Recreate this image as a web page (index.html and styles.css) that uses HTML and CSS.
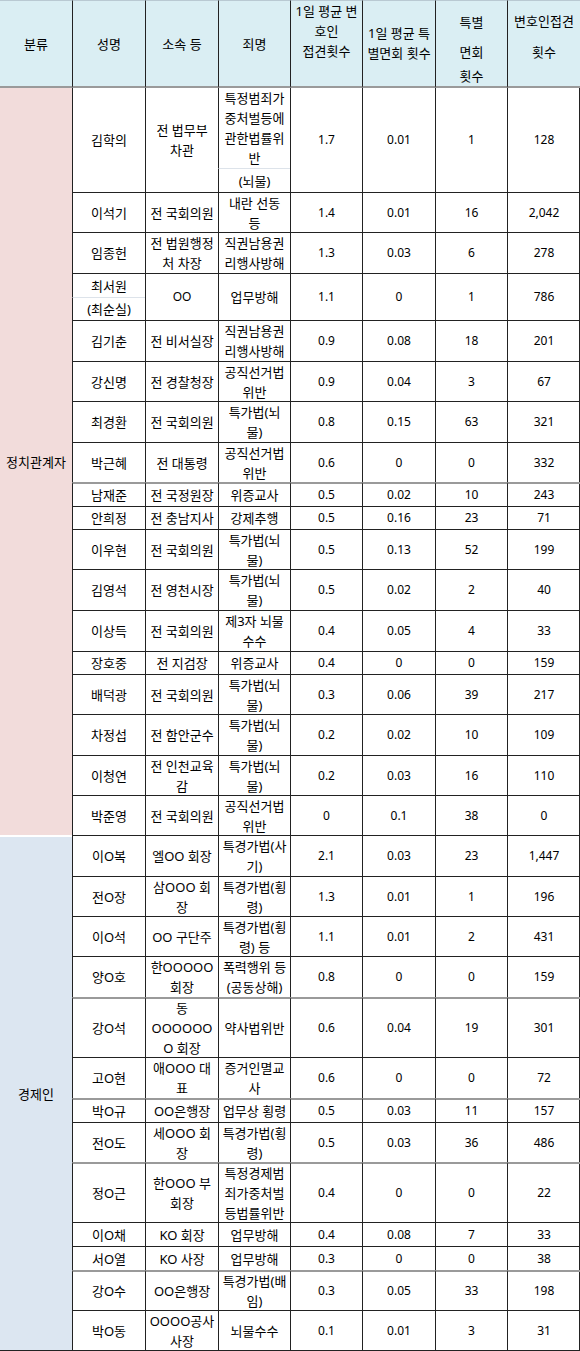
FILE: index.html
```html
<!DOCTYPE html>
<html lang="ko">
<head>
<meta charset="utf-8">
<title>접견 횟수</title>
<link rel="stylesheet" href="styles.css">
</head>
<body>
<div class="sheet">
  <div class="c h first">분류</div>
  <div class="c h">성명</div>
  <div class="c h">소속 등</div>
  <div class="c h">죄명</div>
  <div class="c h top h5"><span class="ln">1일 평균 변</span><span class="ln">호인</span><span class="ln">접견횟수</span></div>
  <div class="c h top h6"><span class="ln">1일 평균 특</span><span class="ln">별면회 횟수</span></div>
  <div class="c h top h7"><span class="ln">특별</span><span class="ln m10">면회</span><span class="ln m4">횟수</span></div>
  <div class="c h top h8"><span class="ln">변호인접견</span><span class="ln m11">횟수</span></div>

  <div class="c cat pol">정치관계자</div>
  <div class="c s2 t0">김학의</div>
  <div class="c s2 t0"><span>전 법무부<br>차관</span></div>
  <div class="c t0"><span>특정범죄가<br>중처벌등에<br>관한법률위<br>반</span></div>
  <div class="c s2 t0 n">1.7</div>
  <div class="c s2 t0 n">0.01</div>
  <div class="c s2 t0 n">1</div>
  <div class="c s2 t0 n">128</div>
  <div class="c sub">(뇌물)</div>

  <div class="c">이석기</div>
  <div class="c">전 국회의원</div>
  <div class="c"><span>내란 선동<br>등</span></div>
  <div class="c n">1.4</div>
  <div class="c n">0.01</div>
  <div class="c n">16</div>
  <div class="c n">2,042</div>

  <div class="c">임종헌</div>
  <div class="c"><span>전 법원행정<br>처 차장</span></div>
  <div class="c"><span>직권남용권<br>리행사방해</span></div>
  <div class="c n">1.3</div>
  <div class="c n">0.03</div>
  <div class="c n">6</div>
  <div class="c n">278</div>

  <div class="c">최서원</div>
  <div class="c s2 n">OO</div>
  <div class="c s2">업무방해</div>
  <div class="c s2 n">1.1</div>
  <div class="c s2 n">0</div>
  <div class="c s2 n">1</div>
  <div class="c s2 n">786</div>
  <div class="c sub">(최순실)</div>

  <div class="c">김기춘</div>
  <div class="c">전 비서실장</div>
  <div class="c"><span>직권남용권<br>리행사방해</span></div>
  <div class="c n">0.9</div>
  <div class="c n">0.08</div>
  <div class="c n">18</div>
  <div class="c n">201</div>

  <div class="c">강신명</div>
  <div class="c">전 경찰청장</div>
  <div class="c"><span>공직선거법<br>위반</span></div>
  <div class="c n">0.9</div>
  <div class="c n">0.04</div>
  <div class="c n">3</div>
  <div class="c n">67</div>

  <div class="c">최경환</div>
  <div class="c">전 국회의원</div>
  <div class="c"><span>특가법(뇌<br>물)</span></div>
  <div class="c n">0.8</div>
  <div class="c n">0.15</div>
  <div class="c n">63</div>
  <div class="c n">321</div>

  <div class="c">박근혜</div>
  <div class="c">전 대통령</div>
  <div class="c"><span>공직선거법<br>위반</span></div>
  <div class="c n">0.6</div>
  <div class="c n">0</div>
  <div class="c n">0</div>
  <div class="c n">332</div>

  <div class="c g">남재준</div>
  <div class="c g">전 국정원장</div>
  <div class="c g">위증교사</div>
  <div class="c g n">0.5</div>
  <div class="c g n">0.02</div>
  <div class="c g n">10</div>
  <div class="c g n">243</div>

  <div class="c">안희정</div>
  <div class="c">전 충남지사</div>
  <div class="c">강제추행</div>
  <div class="c n">0.5</div>
  <div class="c n">0.16</div>
  <div class="c n">23</div>
  <div class="c n">71</div>

  <div class="c">이우현</div>
  <div class="c">전 국회의원</div>
  <div class="c"><span>특가법(뇌<br>물)</span></div>
  <div class="c n">0.5</div>
  <div class="c n">0.13</div>
  <div class="c n">52</div>
  <div class="c n">199</div>

  <div class="c">김영석</div>
  <div class="c">전 영천시장</div>
  <div class="c"><span>특가법(뇌<br>물)</span></div>
  <div class="c n">0.5</div>
  <div class="c n">0.02</div>
  <div class="c n">2</div>
  <div class="c n">40</div>

  <div class="c">이상득</div>
  <div class="c">전 국회의원</div>
  <div class="c"><span>제3자 뇌물<br>수수</span></div>
  <div class="c n">0.4</div>
  <div class="c n">0.05</div>
  <div class="c n">4</div>
  <div class="c n">33</div>

  <div class="c">장호중</div>
  <div class="c">전 지검장</div>
  <div class="c">위증교사</div>
  <div class="c n">0.4</div>
  <div class="c n">0</div>
  <div class="c n">0</div>
  <div class="c n">159</div>

  <div class="c">배덕광</div>
  <div class="c">전 국회의원</div>
  <div class="c"><span>특가법(뇌<br>물)</span></div>
  <div class="c n">0.3</div>
  <div class="c n">0.06</div>
  <div class="c n">39</div>
  <div class="c n">217</div>

  <div class="c">차정섭</div>
  <div class="c">전 함안군수</div>
  <div class="c"><span>특가법(뇌<br>물)</span></div>
  <div class="c n">0.2</div>
  <div class="c n">0.02</div>
  <div class="c n">10</div>
  <div class="c n">109</div>

  <div class="c">이청연</div>
  <div class="c"><span>전 인천교육<br>감</span></div>
  <div class="c"><span>특가법(뇌<br>물)</span></div>
  <div class="c n">0.2</div>
  <div class="c n">0.03</div>
  <div class="c n">16</div>
  <div class="c n">110</div>

  <div class="c">박준영</div>
  <div class="c">전 국회의원</div>
  <div class="c"><span>공직선거법<br>위반</span></div>
  <div class="c n">0</div>
  <div class="c n">0.1</div>
  <div class="c n">38</div>
  <div class="c n">0</div>

  <div class="c cat eco">경제인</div>
  <div class="c">이O복</div>
  <div class="c">엘OO 회장</div>
  <div class="c"><span>특경가법(사<br>기)</span></div>
  <div class="c n">2.1</div>
  <div class="c n">0.03</div>
  <div class="c n">23</div>
  <div class="c n">1,447</div>

  <div class="c">전O장</div>
  <div class="c"><span>삼OOO 회<br>장</span></div>
  <div class="c"><span>특경가법(횡<br>령)</span></div>
  <div class="c n">1.3</div>
  <div class="c n">0.01</div>
  <div class="c n">1</div>
  <div class="c n">196</div>

  <div class="c">이O석</div>
  <div class="c">OO 구단주</div>
  <div class="c"><span>특경가법(횡<br>령) 등</span></div>
  <div class="c n">1.1</div>
  <div class="c n">0.01</div>
  <div class="c n">2</div>
  <div class="c n">431</div>

  <div class="c">양O호</div>
  <div class="c"><span>한OOOOO<br>회장</span></div>
  <div class="c"><span>폭력행위 등<br>(공동상해)</span></div>
  <div class="c n">0.8</div>
  <div class="c n">0</div>
  <div class="c n">0</div>
  <div class="c n">159</div>

  <div class="c g">강O석</div>
  <div class="c g"><span>동<br>OOOOOO<br>O 회장</span></div>
  <div class="c g">약사법위반</div>
  <div class="c g n">0.6</div>
  <div class="c g n">0.04</div>
  <div class="c g n">19</div>
  <div class="c g n">301</div>

  <div class="c">고O현</div>
  <div class="c"><span>애OOO 대<br>표</span></div>
  <div class="c"><span>증거인멸교<br>사</span></div>
  <div class="c n">0.6</div>
  <div class="c n">0</div>
  <div class="c n">0</div>
  <div class="c n">72</div>

  <div class="c g">박O규</div>
  <div class="c g">OO은행장</div>
  <div class="c g">업무상 횡령</div>
  <div class="c g n">0.5</div>
  <div class="c g n">0.03</div>
  <div class="c g n">11</div>
  <div class="c g n">157</div>

  <div class="c">전O도</div>
  <div class="c"><span>세OOO 회<br>장</span></div>
  <div class="c"><span>특경가법(횡<br>령)</span></div>
  <div class="c n">0.5</div>
  <div class="c n">0.03</div>
  <div class="c n">36</div>
  <div class="c n">486</div>

  <div class="c g">정O근</div>
  <div class="c g"><span>한OOO 부<br>회장</span></div>
  <div class="c g"><span>특정경제범<br>죄가중처벌<br>등법률위반</span></div>
  <div class="c g n">0.4</div>
  <div class="c g n">0</div>
  <div class="c g n">0</div>
  <div class="c g n">22</div>

  <div class="c">이O채</div>
  <div class="c">KO 회장</div>
  <div class="c">업무방해</div>
  <div class="c n">0.4</div>
  <div class="c n">0.08</div>
  <div class="c n">7</div>
  <div class="c n">33</div>

  <div class="c">서O열</div>
  <div class="c">KO 사장</div>
  <div class="c">업무방해</div>
  <div class="c n">0.3</div>
  <div class="c n">0</div>
  <div class="c n">0</div>
  <div class="c n">38</div>

  <div class="c g">강O수</div>
  <div class="c g">OO은행장</div>
  <div class="c g"><span>특경가법(배<br>임)</span></div>
  <div class="c g n">0.3</div>
  <div class="c g n">0.05</div>
  <div class="c g n">33</div>
  <div class="c g n">198</div>

  <div class="c">박O동</div>
  <div class="c"><span>OOOO공사<br>사장</span></div>
  <div class="c">뇌물수수</div>
  <div class="c n">0.1</div>
  <div class="c n">0.01</div>
  <div class="c n">3</div>
  <div class="c n">31</div>
</div>
</body>
</html>
```

FILE: styles.css
```css
* {
  box-sizing: border-box;
}

html, body {
  margin: 0;
  padding: 0;
  background: #ffffff;
}

body {
  font-family: "Noto Sans", "Noto Sans CJK KR", sans-serif;
  font-size: 13px;
  color: #000;
}

.sheet {
  display: grid;
  width: 580px;
  grid-template-columns: 72px 73px 73px 72px 72px 73px 72px 73px;
  grid-template-rows:
    88px
    80px 24px 40px 41px 24px 23px 41px 40px 41px 40px
    24px 23px 40px 41px 41px 23px 40px 41px 40px 40px
    41px 40px 40px 41px 60px 41px 24px 40px 60px 24px 24px 40px 40px;
  border-right: 1px solid #222;
  border-bottom: 1px solid #222;
}

.c {
  display: flex;
  align-items: center;
  justify-content: center;
  text-align: center;
  white-space: nowrap;
  line-height: 20px;
  border-left: 1px solid #222;
  border-top: 1px solid #222;
  overflow: hidden;
}

.c > span {
  display: block;
}

.n {
  font-size: 12px;
}

.g {
  border-top: 2px solid #9a9a9a;
}

.t0 {
  border-top: none;
}

.sub {
  border-top: 1px solid #dde3ea;
}

.s2 {
  grid-row: span 2;
}

/* header */
.h {
  background: #daeef3;
  border-top: 1px solid #b9c9d2;
  border-bottom: 2px solid #9a9a9a;
}

.h.first {
  border-left: none;
}

.h.top {
  flex-direction: column;
  justify-content: flex-start;
}

.ln {
  display: block;
  line-height: 20px;
}

.h6 {
  padding-top: 22px;
}

.h7 {
  padding-top: 11px;
}

.h8 {
  padding-top: 10px;
}

.m10 {
  margin-top: 10px;
}

.m4 {
  margin-top: 4px;
}

.m11 {
  margin-top: 11px;
}

/* category column */
.cat {
  border-left: none;
  border-top: none;
}

.pol {
  grid-row: span 20;
  background: #f2dcdb;
}

.eco {
  grid-row: span 13;
  background: #dce6f1;
  border-top: 2px solid #ffffff;
}
```
